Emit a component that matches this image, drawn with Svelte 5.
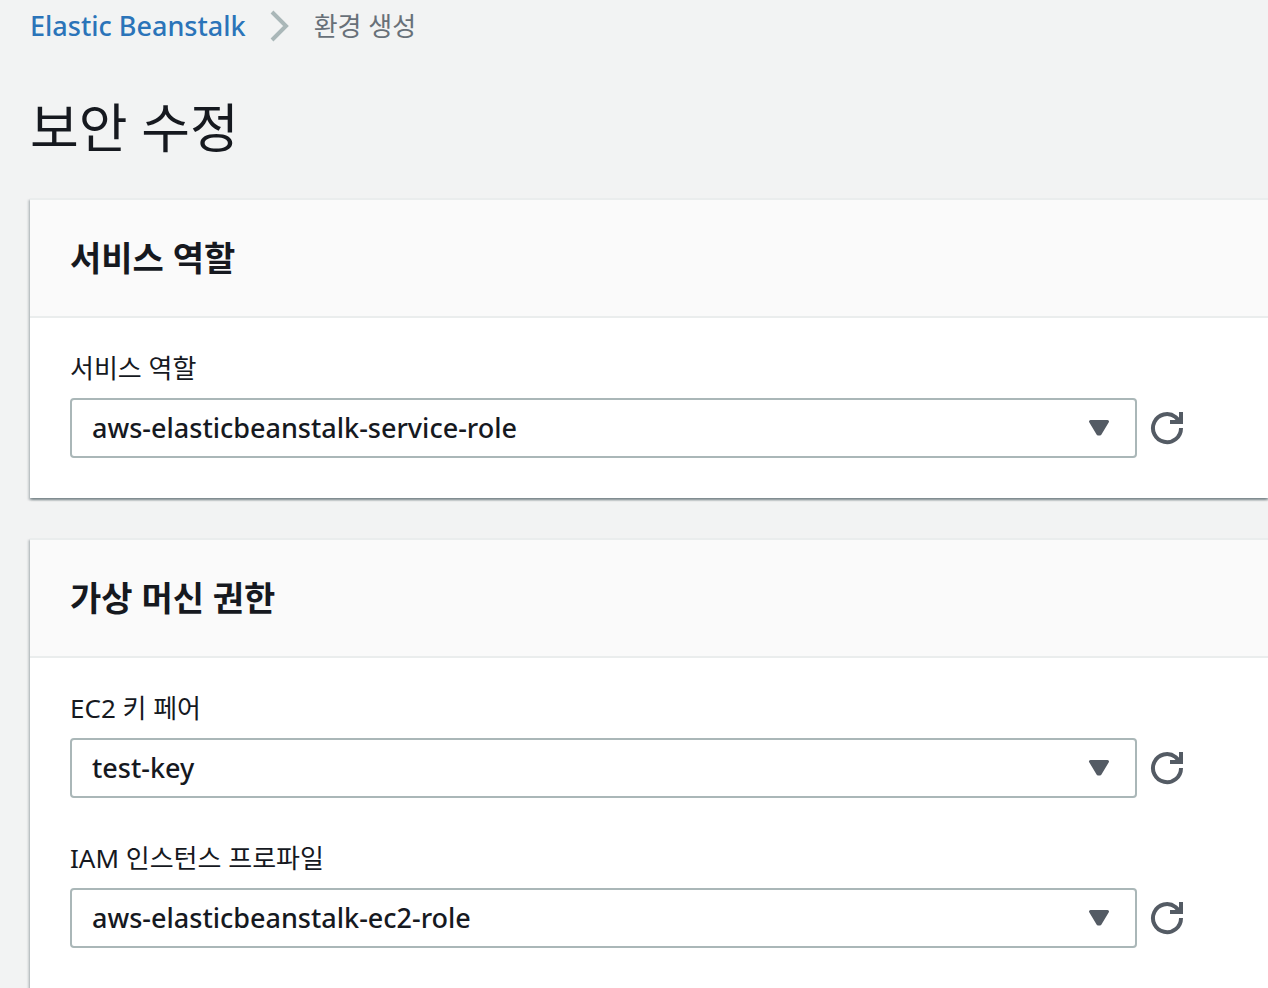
<script>
  const panels = [
    {
      title: '서비스 역할',
      fields: [
        { id: 'service-role', label: '서비스 역할', value: 'aws-elasticbeanstalk-service-role' }
      ]
    },
    {
      title: '가상 머신 권한',
      fields: [
        { id: 'key-pair', label: 'EC2 키 페어', value: 'test-key' },
        { id: 'instance-profile', label: 'IAM 인스턴스 프로파일', value: 'aws-elasticbeanstalk-ec2-role' }
      ]
    }
  ];
</script>

<div class="page">
  <nav class="breadcrumb">
    <a href="#home">Elastic Beanstalk</a>
    <svg class="chevron" viewBox="0 0 20 32" aria-hidden="true">
      <path d="M2 2 L16 16 L2 30" />
    </svg>
    <span>환경 생성</span>
  </nav>

  <main>
    <h1>보안 수정</h1>

    {#each panels as panel}
      <section class="panel">
        <header><h2>{panel.title}</h2></header>
        <div class="fields">
          {#each panel.fields as field}
            <div class="field">
              <label for={field.id}>{field.label}</label>
              <div class="control">
                <div class="select">
                  <select id={field.id}>
                    <option>{field.value}</option>
                  </select>
                  <svg class="caret" viewBox="0 0 22 18" aria-hidden="true">
                    <path d="M2.5 2.5 H19.5 L12 15 H10 Z" />
                  </svg>
                </div>
                <button type="button" aria-label="refresh">
                  <svg viewBox="0 0 34 34" aria-hidden="true">
                    <path d="M31 17 A14 14 0 1 1 25.5 6 L30 10.5" />
                    <path d="M31 1 V11 H20" />
                  </svg>
                </button>
              </div>
            </div>
          {/each}
        </div>
      </section>
    {/each}
  </main>
</div>

<style>
  :global(body) {
    margin: 0;
    background: #f2f3f3;
  }

  .page {
    padding-left: 30px;
    overflow: hidden;
    color: #16191f;
    font-family: 'Noto Sans', 'Noto Sans CJK KR', sans-serif;
    font-size: 26px;
    line-height: 40px;
  }

  .breadcrumb {
    display: flex;
    align-items: center;
    gap: 24px;
    height: 52px;
    color: #687078;
  }

  .breadcrumb a {
    color: #2b74b9;
    font-size: 27px;
    font-weight: 500;
    text-decoration: none;
  }

  .chevron {
    width: 20px;
    height: 32px;
    fill: none;
    stroke: #aab7b8;
    stroke-width: 4;
  }

  h1 {
    margin: 0;
    padding: 40px 0 34px;
    font-size: 53px;
    font-weight: 400;
    line-height: 72px;
  }

  .panel {
    margin-bottom: 40px;
    border-top: 2px solid #eaeded;
    background: #fff;
    box-shadow:
      0 2px 2px 0 rgba(0, 28, 36, 0.3),
      2px 2px 2px 0 rgba(0, 28, 36, 0.15),
      -2px 2px 2px 0 rgba(0, 28, 36, 0.15);
  }

  header {
    padding: 36px 40px;
    background: #fafafa;
    border-bottom: 2px solid #eaeded;
  }

  h2 {
    margin: 0;
    font-size: 34px;
    font-weight: 700;
    line-height: 44px;
  }

  .fields {
    display: grid;
    gap: 40px;
    padding: 30px 84px 40px 40px;
  }

  .field {
    display: grid;
    gap: 10px;
  }

  .control {
    display: flex;
    align-items: center;
    gap: 13px;
  }

  .select {
    display: grid;
    flex: 1;
    align-items: center;
  }

  select {
    grid-area: 1 / 1;
    width: 100%;
    height: 60px;
    padding: 0 60px 0 20px;
    border: 2px solid #aab7b8;
    border-radius: 4px;
    background: #fff;
    color: inherit;
    font: inherit;
    font-size: 27px;
    font-weight: 500;
    appearance: none;
  }

  .caret {
    grid-area: 1 / 1;
    justify-self: end;
    width: 22px;
    height: 18px;
    margin-right: 27px;
    fill: #545b64;
    stroke: #545b64;
    stroke-width: 3;
    stroke-linejoin: round;
    pointer-events: none;
  }

  button {
    display: flex;
    padding: 0;
    border: 0;
    background: none;
  }

  button svg {
    width: 34px;
    height: 34px;
    fill: none;
    stroke: #545b64;
    stroke-width: 4;
  }
</style>
